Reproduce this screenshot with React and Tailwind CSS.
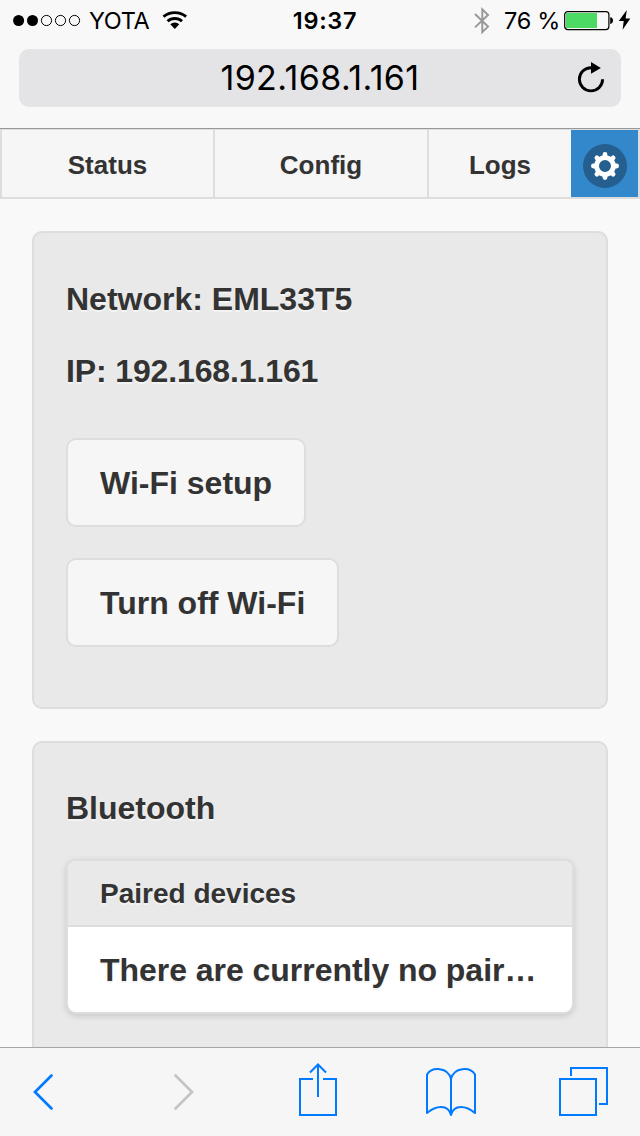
function StatusBar() {
  return (
    <div className="grid h-10 shrink-0 grid-cols-[1fr_auto_1fr] items-center font-['Inter',sans-serif] text-[24px] leading-[40px] text-black">
      <div className="flex items-center pl-[13px]">
        <svg width="68" height="14" viewBox="0 0 68 14">
          <circle cx="5.6" cy="7.5" r="5.5" />
          <circle cx="19.5" cy="7.5" r="5.5" />
          <g fill="none" stroke="#000" strokeWidth="1">
            <circle cx="33.5" cy="7.5" r="5.1" />
            <circle cx="47.5" cy="7.5" r="5.1" />
            <circle cx="61.5" cy="7.5" r="5.1" />
          </g>
        </svg>
        <span className="ml-[8px] w-[73px] whitespace-nowrap pt-[2px] text-[23.5px] leading-[38px] tracking-[-0.4px]">YOTA</span>
        <svg width="26" height="20" viewBox="0 0 26 20">
          <g fill="none" stroke="#000" strokeWidth="2.9">
            <path d="M1.5 6.7a17.6 17.6 0 0 1 22.6 0" />
            <path d="M5.6 11.3a10.5 10.5 0 0 1 14.4 0" />
          </g>
          <path d="M12.8 19l-4.5-4.7a6.300 6.300 0 0 1 9 0z" />
        </svg>
      </div>
      <span className="pl-[10px] pt-[2px] text-[23.5px] font-semibold leading-[38px] tracking-[0.7px]">19:37</span>
      <div className="flex items-center justify-end pr-[9px]">
        <svg className="mt-[2px]" width="16" height="28" viewBox="0 0 16 28" fill="none" stroke="#999" strokeWidth="2">
          <path d="M1 7l13 12.6-5.7 5.6V2.4L14 8 1 20.4" />
        </svg>
        <span className="ml-[14px] whitespace-nowrap pt-[2px] text-[23.5px] leading-[38px] tracking-[-0.3px]">76 %</span>
        <svg className="ml-[4px]" width="67" height="24" viewBox="0 0 67 24">
          <rect x="0.7" y="3.6" width="44.2" height="18" rx="3" fill="none" stroke="#000" strokeWidth="1.2" />
          <rect x="2" y="5" width="31" height="15" fill="#4cd964" />
          <path d="M46.2 9.2q2.8.4 2.8 3.4t-2.8 3.4z" />
          <path d="M62.8 2L54.8 13h4.9L58.6 21.8 66.3 10.6H61.6z" />
        </svg>
      </div>
    </div>
  );
}

function AddressBar() {
  return (
    <div className="h-[88px] shrink-0 px-[19px] pt-[9px]">
      <div className="grid h-[58px] grid-cols-[1fr_auto_1fr] items-center rounded-[10px] bg-[#e4e4e6] font-['Inter',sans-serif] text-black">
        <span className="col-start-2 text-[34px] leading-[58px] tracking-[0.4px]">192.168.1.161</span>
        <svg className="mr-[15px] justify-self-end" width="30" height="34" viewBox="0 0 30 34">
          <path d="M15 6.7a11.6 11.6 0 1 0 11.6 11.6v1" fill="none" stroke="#000" strokeWidth="2.9" />
          <path d="M15 1v11.8l9.9-5.9z" />
        </svg>
      </div>
    </div>
  );
}

function Tabs() {
  return (
    <nav className="grid h-[70px] shrink-0 grid-cols-[213px_214px_144px_67px_2px] border-b-2 border-[#ddd] bg-[#ddd] pt-px text-[26px]">
      <a className="flex items-center justify-center border-l-2 border-[#ddd] bg-[#f6f6f6] pt-[3px]">Status</a>
      <a className="flex items-center justify-center border-l-2 border-[#ddd] bg-[#f6f6f6] pt-[3px]">Config</a>
      <a className="flex items-center justify-center border-l-2 border-[#ddd] bg-[#f6f6f6] pt-[3px]">Logs</a>
      <a className="flex items-center justify-center bg-[#3388cc] pt-[5px]">
        <svg width="44" height="44" viewBox="0 0 44 44">
          <circle cx="22" cy="22" r="22" fill="#245f8f" />
          <circle cx="22" cy="22" r="8.4" fill="none" stroke="#fff" strokeWidth="4.8" />
          <g stroke="#fff" strokeWidth="4.8" strokeLinecap="round">
            <path d="M22 10.4v3M22 30.6v3M10.4 22h3M30.6 22h3M13.9 13.9l2 2M28.1 28.1l2 2M30.1 13.9l-2 2M15.9 28.1l-2 2" />
          </g>
        </svg>
      </a>
    </nav>
  );
}

function Button({ children }) {
  return (
    <button className="flex h-[89px] items-center rounded-[10px] border-2 border-[#ddd] bg-[#f6f6f6] px-8 font-bold">
      {children}
    </button>
  );
}

function Toolbar() {
  return (
    <footer className="flex h-[89px] shrink-0 items-start border-t border-[#a5a5a5] bg-[#f6f6f6] pt-[15px]">
      <svg width="640" height="56" viewBox="0 0 640 56" fill="none" stroke="#007aff" strokeWidth="2">
        <path d="M51.5 12.5L35 29L51.5 45.5" strokeWidth="2.7" strokeLinecap="round" />
        <path d="M175.5 12.5L192 29L175.5 45.5" stroke="#c4c4c4" strokeWidth="2.7" strokeLinecap="round" />
        <path d="M313 16h-13v36h36V16h-13M318 34V2M310 9.5l8-8 8 8" />
        <path d="M451 52V16C448 4 432 3.500 427 11.500V50C436 42.500 448 41 451 52C454 41 466 42.500 475 50V11.500C470 3.500 454 4 451 16" strokeLinejoin="round" />
        <path d="M560 16h36v36h-36zM571 13V5h36v36h-8" />
      </svg>
    </footer>
  );
}

export default function App() {
  return (
    <div className="flex h-[1136px] w-[640px] flex-col overflow-hidden bg-[#f9f9f9] font-['Liberation_Sans',Arial,sans-serif] text-[32px] font-bold text-[#333] [text-shadow:0_2px_0_#f3f3f3]">
      <header className="h-[129px] shrink-0 border-b border-[#999] bg-[#f8f8f8] font-normal [text-shadow:none]">
        <StatusBar />
        <AddressBar />
      </header>
      <Tabs />
      <main className="flex min-h-0 flex-1 flex-col gap-8 overflow-hidden px-8 pt-8">
        <section className="h-[478px] shrink-0 rounded-[10px] border-2 border-[#ddd] bg-[#e9e9e9] px-8 pt-[46px]">
          <p className="leading-[40px]">Network: EML33T5</p>
          <p className="mt-8 leading-[40px] tracking-[-0.13px]">IP: 192.168.1.161</p>
          <div className="mt-[47px] flex flex-col items-start gap-[31px]">
            <Button>Wi-Fi setup</Button>
            <Button>Turn off Wi-Fi</Button>
          </div>
        </section>
        <section className="h-[478px] shrink-0 rounded-[10px] border-2 border-[#ddd] bg-[#e9e9e9] px-8 pt-[45px]">
          <h2 className="leading-[40px]">Bluetooth</h2>
          <ul className="mt-[31px] h-[155px] overflow-hidden rounded-[10px] border-2 border-[#ddd] bg-white shadow-[0_2px_6px_rgba(0,0,0,0.15)]">
            <li className="h-[66px] border-b-2 border-[#ddd] bg-[#e9e9e9] px-8 text-[28px] leading-[66px]">Paired devices</li>
            <li className="whitespace-nowrap px-8 leading-[86px] tracking-[-0.04px]">There are currently no pair…</li>
          </ul>
        </section>
      </main>
      <Toolbar />
    </div>
  );
}
